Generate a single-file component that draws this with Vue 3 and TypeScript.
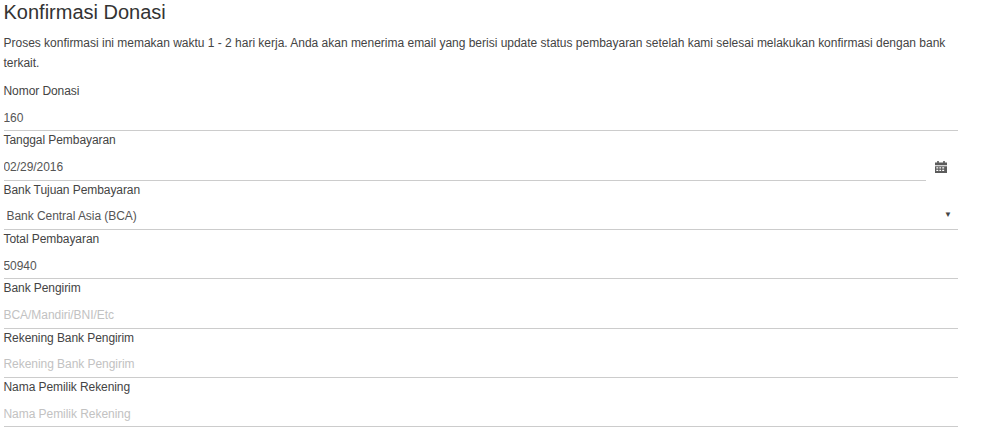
<template>
  <section class="page">
    <h1 class="title">Konfirmasi Donasi</h1>
    <p class="intro">
      Proses konfirmasi ini memakan waktu 1 - 2 hari kerja. Anda akan menerima email yang berisi update status pembayaran setelah kami selesai melakukan konfirmasi dengan bank terkait.
    </p>
    <form class="form" @submit.prevent>
      <div v-for="field in fields" :key="field.label" class="field">
        <label class="label">{{ field.label }}</label>
        <div v-if="field.kind === 'date'" class="date-row">
          <input class="control" type="text" :value="field.value" />
          <span class="addon">
            <svg width="12" height="12.5" viewBox="0 0 11 12" preserveAspectRatio="none" aria-hidden="true">
              <path fill="#5c5c5c" d="M2 0h1.5v1.5h4V0H9v1.5h2V4H0V1.5h2zM0 5h11v7H0zm1.2 1v1.2h1.8V6zm2.8 0v1.2h1.6V6zm2.6 0v1.2h1.8V6zM1.2 8.3v1.2h1.8V8.3zm2.8 0v1.2h1.6V8.3zm2.6 0v1.2h1.8V8.3z" />
            </svg>
          </span>
        </div>
        <div v-else-if="field.kind === 'select'" class="select-row">
          <select class="control select">
            <option>{{ field.value }}</option>
          </select>
          <span class="caret">▼</span>
        </div>
        <input v-else class="control" type="text" :value="field.value" :placeholder="field.placeholder" />
      </div>
    </form>
  </section>
</template>

<script setup lang="ts">
type Field = {
  label: string
  kind?: 'date' | 'select'
  value?: string
  placeholder?: string
}

const fields: Field[] = [
  { label: 'Nomor Donasi', value: '160' },
  { label: 'Tanggal Pembayaran', kind: 'date', value: '02/29/2016' },
  { label: 'Bank Tujuan Pembayaran', kind: 'select', value: 'Bank Central Asia (BCA)' },
  { label: 'Total Pembayaran', value: '50940' },
  { label: 'Bank Pengirim', placeholder: 'BCA/Mandiri/BNI/Etc' },
  { label: 'Rekening Bank Pengirim', placeholder: 'Rekening Bank Pengirim' },
  { label: 'Nama Pemilik Rekening', placeholder: 'Nama Pemilik Rekening' },
]
</script>

<style>
html, body { background: #fff; }
</style>

<style scoped>
.page {
  width: 954.5px;
  margin-left: 3.5px;
  padding-top: 1px;
  font-family: "Liberation Sans", Arial, sans-serif;
  font-size: 12px;
  color: #333;
}
.title {
  margin: 0;
  font-size: 20px;
  font-weight: 400;
  line-height: 22px;
  color: #333;
}
.intro {
  margin: 10px 0 0;
  line-height: 20px;
  letter-spacing: -0.012px;
  color: #444;
}
.form {
  margin-top: 9px;
}
.field {
  height: 49.33px;
}
.label {
  display: block;
  height: 17.33px;
  padding-top: 1px;
  box-sizing: border-box;
  line-height: 17px;
  letter-spacing: -0.07px;
  color: #444;
}
.control {
  display: block;
  width: 100%;
  height: 32px;
  box-sizing: border-box;
  padding: 6px 0 0;
  border: 0;
  border-bottom: 1px solid #ccc;
  border-radius: 0;
  outline: none;
  background: transparent;
  font: inherit;
  letter-spacing: -0.05px;
  color: #555;
}
.control::placeholder {
  color: #c2c2c2;
  opacity: 1;
}
.date-row {
  display: flex;
}
.date-row .control {
  flex: 1;
  min-width: 0;
}
.addon {
  width: 32px;
  height: 32px;
  display: flex;
  align-items: center;
  justify-content: center;
  padding: 5px 2px 0 0;
  box-sizing: border-box;
}
.select-row {
  position: relative;
}
.select {
  appearance: none;
  padding-left: 3px;
}
.caret {
  position: absolute;
  right: 6px;
  top: 12px;
  font-size: 8px;
  line-height: 10px;
  color: #444;
  pointer-events: none;
}
</style>
